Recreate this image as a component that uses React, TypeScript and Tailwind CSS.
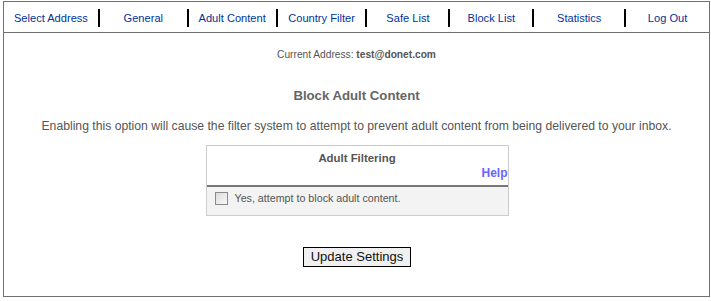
import React from 'react'

const navItems = [
  { label: 'Select Address', w: 94 },
  { label: 'General', w: 89 },
  { label: 'Adult Content', w: 89 },
  { label: 'Country Filter', w: 90 },
  { label: 'Safe List', w: 83 },
  { label: 'Block List', w: 84 },
  { label: 'Statistics', w: 92 },
  { label: 'Log Out', w: 85 },
]

export default function App() {
  return (
    <div className="w-[711px] h-[301px] bg-white pt-[1px] pl-[3px] font-['Liberation_Sans',Arial,sans-serif]">
      <div className="w-[707px] h-[296px] border border-[#707070] flex flex-col">
        {/* Menu */}
        <div className="flex h-[31px] pt-[2px] items-center border-b border-[#707070]">
          {navItems.map((item, i) => (
            <div
              key={item.label}
              style={{ width: item.w }}
              className={
                'h-[18px] flex items-center justify-center text-[11.1px] text-[#003399] ' +
                (i > 0 ? 'border-l-2 border-black' : '')
              }
            >
              {item.label}
            </div>
          ))}
        </div>

        <div className="flex flex-col items-center">
          <div className="mt-[15px] text-[10.2px] text-[#555555] leading-[14px]">
            Current Address: <span className="font-bold">test@donet.com</span>
          </div>

          <div className="mt-[26px] text-[13.2px] font-bold text-[#666666] leading-[16px]">
            Block Adult Content
          </div>

          <div className="mt-[14px] text-[12.2px] text-[#555555] leading-[16px]">
            Enabling this option will cause the filter system to attempt to prevent adult content from being delivered to your inbox.
          </div>

          {/* Filtering box */}
          <div className="mt-[11px] ml-[1px] w-[303px] border border-[#cccccc]">
            <div className="h-[41px] border-b-2 border-[#777777] flex flex-col">
              <div className="text-center text-[11.4px] font-bold text-[#555555] mt-[5px] leading-[14px]">
                Adult Filtering
              </div>
              <div className="text-right text-[12px] font-bold text-[#6666ff] mt-[1px] leading-[14px]">
                Help
              </div>
            </div>
            <div className="h-[28px] bg-[#f3f3f3] flex items-start pt-[5px] pl-[8px] gap-[7px]">
              <div className="w-[13px] h-[13px] border border-[#8a8a8a] bg-gradient-to-br from-[#dcdcdc] to-[#f8f8f8]" />
              <span className="text-[10.7px] leading-[13px] text-[#555555]">Yes, attempt to block adult content.</span>
            </div>
          </div>

          <button className="mt-[31px] ml-[1px] w-[108px] h-[20px] border border-black bg-[#f0f0f0] text-[13px] text-[#111111] leading-[18px] font-['Liberation_Sans',Arial,sans-serif]">
            Update Settings
          </button>
        </div>
      </div>
    </div>
  )
}
